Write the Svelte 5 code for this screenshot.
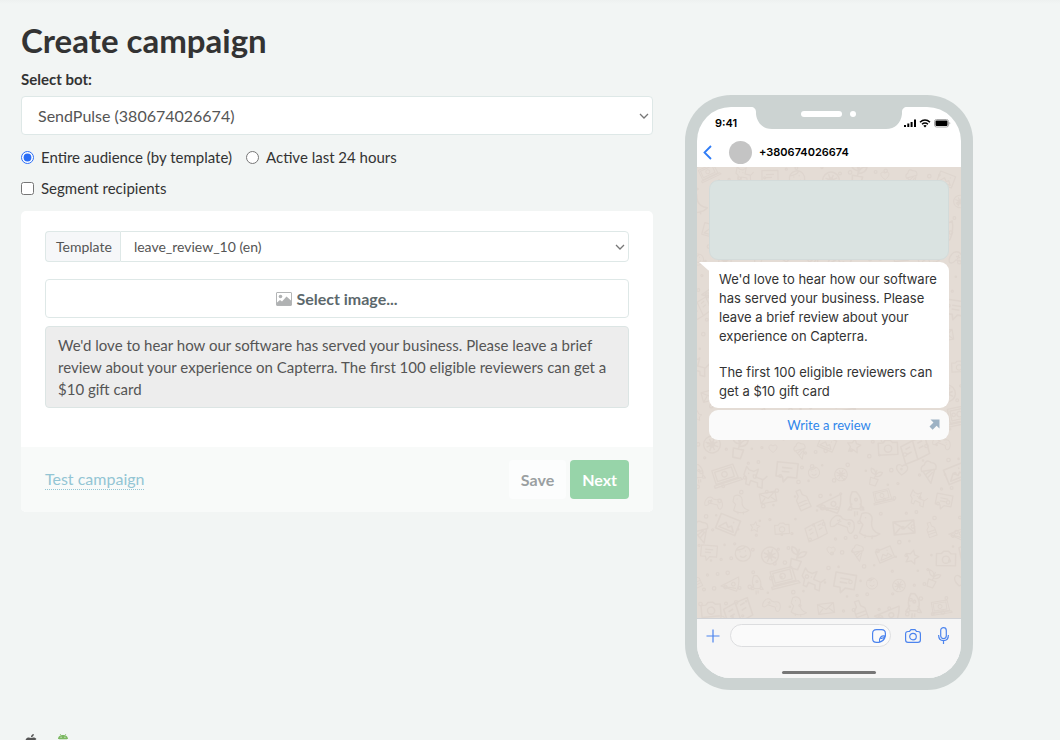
<script lang="ts">
  interface Doodle {
    id: string
    x: number
    y: number
    r: number
    s: number
  }

  let bot = $state('sendpulse')
  let audience = $state('template')
  let segment = $state(false)
  let template = $state('leave_review_10')
  let reply = $state('')

  const templateText =
    "We'd love to hear how our software has served your business. Please leave a brief review about your experience on Capterra. The first 100 eligible reviewers can get a $10 gift card"

  const paragraphs = [
    "We'd love to hear how our software has served your business. Please leave a brief review about your experience on Capterra.",
    'The first 100 eligible reviewers can get a $10 gift card'
  ]

  // Chat wallpaper
  const shapes = [
    'laptop', 'dino', 'photo', 'face', 'pizza', 'book', 'heart', 'cat', 'mail',
    'star', 'wheel', 'rocket', 'gamepad', 'cone', 'bubble', 'bottle', 'camera', 'plant'
  ]

  const doodles: Doodle[] = []
  for (let row = 0; row < 17; row++) {
    for (let col = 0; col < 10; col++) {
      const n = row * 10 + col
      doodles.push({
        id: shapes[(n * 7 + row * 3) % shapes.length],
        x: 12 + col * 29 + (row % 2 ? -14 : 0) + ((n * 5) % 7),
        y: 10 + row * 27 + ((n * 11) % 9) - 4,
        r: ((n * 37) % 50) - 25,
        s: 0.8 + ((n * 13) % 6) / 10
      })
    }
  }

  const dots = Array.from({ length: 420 }, (_, i) => ({
    x: (i * 97.3) % 264,
    y: (i * 61.7 + (i % 5) * 13) % 452,
    r: 0.7 + (i % 4) * 0.35
  }))
</script>

<div class="page">
  <main class="layout">
    <section class="form">
      <h1>Create campaign</h1>

      <label class="field-label" for="bot">Select bot:</label>
      <div class="select-wrap">
        <select id="bot" class="bot-select" bind:value={bot}>
          <option value="sendpulse">SendPulse (380674026674)</option>
        </select>
        <svg class="chevron" viewBox="0 0 10 6"><path d="M1 1l4 4 4-4" /></svg>
      </div>

      <div class="choices">
        <label><input type="radio" name="audience" value="template" bind:group={audience} />Entire audience (by template)</label>
        <label><input type="radio" name="audience" value="active" bind:group={audience} />Active last 24 hours</label>
      </div>
      <div class="choices">
        <label><input type="checkbox" bind:checked={segment} />Segment recipients</label>
      </div>

      <div class="card">
        <div class="card-body">
          <div class="input-group">
            <label for="template">Template</label>
            <div class="select-wrap">
              <select id="template" bind:value={template}>
                <option value="leave_review_10">leave_review_10 (en)</option>
              </select>
              <svg class="chevron" viewBox="0 0 10 6"><path d="M1 1l4 4 4-4" /></svg>
            </div>
          </div>

          <button class="image-button">
            <svg width="16" height="14" viewBox="0 0 16 14">
              <rect x="0.5" y="0.5" width="15" height="13" rx="0.5" fill="#fff" stroke="#b3b5b6" />
              <circle cx="4.5" cy="4.5" r="1.8" fill="#b0b2b3" />
              <path d="M1 13v-2.500l3-2.500 2 1.500 4.500-5 4.500 4V13z" fill="#b0b2b3" />
            </svg>
            Select image...
          </button>

          <textarea rows="3" aria-label="Template text" readonly value={templateText}></textarea>
        </div>

        <div class="card-footer">
          <a href="#test">Test campaign</a>
          <div class="actions">
            <button class="save">Save</button>
            <button class="next">Next</button>
          </div>
        </div>
      </div>
    </section>

    <aside class="phone">
      <div class="screen">
        <svg class="notch" width="156" height="22" viewBox="0 0 156 22">
          <path d="M0 0h156c-3 0-5 2-5 5v2c-1 9-7 15-16 15H21C12 22 6 16 5 7V5c0-3-2-5-5-5z" fill="#ccd3d2" />
          <rect x="50" y="4" width="41" height="6" rx="3" fill="#fff" />
          <circle cx="102" cy="7" r="3" fill="#fff" />
        </svg>

        <div class="status">
          <span>9:41</span>
          <svg width="47" height="9" viewBox="0 0 47 9">
            <path d="M0 6h2v2H0zM3.300 4.500h2V8h-2zM6.600 3h2v5h-2zM10 0.500h2V8h-2z" />
            <g fill="none" stroke="#000" stroke-width="1.500">
              <path d="M16 3.200c3-2.800 7-2.800 10 0M18 5.200c2-1.700 4-1.700 6 0" />
            </g>
            <path d="M21 8.500L19.300 6.700c1-.9 2.400-.9 3.400 0z" />
            <rect x="30.500" y="0.500" width="14" height="7.500" rx="2" fill="none" stroke="#aaa" />
            <rect x="31.500" y="1.500" width="12" height="5.500" rx="1" />
            <path d="M45.500 3v2.500c1-.4 1-2.100 0-2.500z" fill="#999" />
          </svg>
        </div>

        <header class="contact">
          <svg width="9" height="15" viewBox="0 0 9 15"><path d="M8 1L1.500 7.500 8 14" fill="none" stroke="#2f7cf6" stroke-width="1.800" /></svg>
          <span class="avatar"></span>
          <strong>+380674026674</strong>
        </header>

        <div class="chat">
          <svg class="wallpaper" viewBox="0 0 264 452" preserveAspectRatio="xMidYMid slice">
            <defs>
              <path id="laptop" d="M-11-8H9L10 5H-11zM-9-6H7V3H-9zM-13 6H12l1 2H-13zM-1-4a2.500 2.500 0 1 0 .1 0" />
              <path id="dino" d="M-8-9c5-3 10 0 9 6 0 5 3 8 8 9-4 4-13 4-17 1l2-7-3-3zM-5-6h1M-3 8v3M3 8v3" />
              <path id="photo" d="M-8-6H8V6H-8zM-6 4l4-5 3 3 2-2 3 4zM3-3h1" />
              <path id="face" d="M-7 0a7 7 0 1 0 14 0 7 7 0 1 0-14 0M-3-2h1M2-2h1M-3 2q3 3 6 0M-6-4q6 1 9-2" />
              <path id="pizza" d="M-9 6L8-8q3 8 1 16zM-4 4a2 2 0 1 0 .1 0M4-1a2 2 0 1 0 .1 0M8 5L-6 6" />
              <path id="book" d="M-10-5L0-7l10-1V6L0 8l-10 1zM0-7V8M-7-2l4-1M-7 2l4-1M3-4l4-1M3 0l4-1" />
              <path id="heart" d="M0 5C-9-1-4-7 0-3c4-4 9 2 0 8z" />
              <path id="cat" d="M-8-7l3 2h4l3-3v7h6l2 7H6L5 3H-1v4h-3L-5 2l-3-2zM-5-2h1M-1-2h1M8 0l3-5" />
              <path id="mail" d="M-8-5H8V5H-8zM-8-5L0 1l8-6M-8 5l5-5M8 5L3 0" />
              <path id="star" d="M0-6l2 4 4 .6-3 3L4 6 0 4l-4 2 1-4.400-3-3L-2-2z" />
              <path id="wheel" d="M-7 0a7 7 0 1 0 14 0 7 7 0 1 0-14 0M-5 0H5M0-5V5M-4-4l8 8M4-4l-8 8M-2 0a2 2 0 1 0 4 0 2 2 0 1 0-4 0" />
              <path id="rocket" d="M0-9q6 6 3 13h-6q-3-7 0-13zM-3 0l-3 5 3 0M3 0l3 5-3 0M-1 6v4M1 6v3M-1-3a1 1 0 1 0 2 0 1 1 0 1 0-2 0" />
              <path id="gamepad" d="M-9-4q4-3 7 0h4q4-3 7 0 4 6 1 10-3 1-5-4h-10q-2 5-5 4-3-4 1-10zM-6-1h4M-4-3v4M4-2h1M6 0h1" />
              <path id="cone" d="M-5-1L0 10 5-1zM-6-1q-1-4 3-5 2-5 6-1 5 1 3 6zM-3 2L3-1M-2 5l5-4" />
              <path id="bubble" d="M-8-6H8V5H1l-3 4-1-4h-5zM-4-2h8M-4 1h6" />
              <path id="bottle" d="M-2-9h4v5l3 3V9h-10V-1l3-3zM-5 2H5M-5 5H5" />
              <path id="camera" d="M-8-4h4l2-2h4l2 2h4V6H-8zM-3 1a3 3 0 1 0 6 0 3 3 0 1 0-6 0" />
              <path id="plant" d="M-4 2h8L3 9h-6zM0 2V-7M0-2q-6 0-6-5 5 0 6 5M0 0q6-1 6-6-5 0-6 6" />
            </defs>
            <g class="doodles">
              {#each doodles as d}
                <use href="#{d.id}" transform="translate({d.x} {d.y}) rotate({d.r}) scale({d.s})" />
              {/each}
              {#each dots as dot}
                <circle cx={dot.x} cy={dot.y} r={dot.r} />
              {/each}
            </g>
          </svg>

          <div class="messages">
            <div class="media"></div>
            <div class="bubble">
              <svg class="tail" width="12" height="10" viewBox="0 0 12 10"><path d="M0 0h12v10L9 8z" fill="#fff" /></svg>
              {#each paragraphs as text}
                <p>{text}</p>
              {/each}
            </div>
            <a class="link" href="#review">
              Write a review
              <svg class="arrow" width="11" height="11" viewBox="0 0 11 11"><path d="M1.500 0.500h9v9L7.600 6.700l-4 4L0.500 7.500l4-4z" fill="#9db2c4" /></svg>
            </a>
          </div>
        </div>

        <div class="composer">
          <svg width="14" height="14" viewBox="0 0 14 14"><path d="M7 0.500v13M0.500 7h13" /></svg>
          <div class="reply">
            <input type="text" aria-label="Message" bind:value={reply} />
            <svg width="14" height="14" viewBox="0 0 14 14">
              <path d="M13.400 7V4.500c0-2.500-1.400-3.900-3.900-3.900h-5C2 0.600 0.600 2 0.600 4.500v5c0 2.500 1.400 3.900 3.900 3.900H7c3-.8 5.700-3.500 6.400-6.400zM13.300 7c-4-.8-6.500 1.500-5.800 6.300M13.300 7c-1 2-3 2.500-4.600 2.300" />
            </svg>
          </div>
          <svg width="16" height="14" viewBox="0 0 16 14">
            <path d="M3 2.500h1.500L6 0.700h4l1.500 1.800H13c1.500 0 2.400.9 2.400 2.400v6c0 1.500-.9 2.400-2.400 2.400H3c-1.500 0-2.400-.9-2.400-2.400v-6C0.600 3.400 1.500 2.500 3 2.500z" />
            <circle cx="8" cy="7.600" r="3.300" />
          </svg>
          <svg width="11" height="17" viewBox="0 0 11 17">
            <rect x="2.700" y="0.600" width="5.600" height="11" rx="2.800" />
            <path d="M0.600 8c0 3.600 2 5.600 4.900 5.600s4.900-2 4.900-5.600M5.500 13.600V17" />
          </svg>
        </div>
        <div class="home-bar"></div>
      </div>
    </aside>
  </main>

  <footer class="platforms">
    <svg width="12" height="14" viewBox="0 0 12 14">
      <path d="M8.800 0C7 .3 5.800 1.700 6 3.300 7.700 3.200 8.900 1.700 8.800 0zM11.500 5C9.500 3 7.500 3.500 6.200 4.100 4.500 3.500 2.600 3 1 4.900c-2.200 3.200.3 8.800 2.700 8.800 1 0 1.400-.6 2.500-.6s1.400.6 2.400.6c1.500 0 2.600-2 3.100-3.500-2.200-1-2.300-3.900-.2-5.200z" fill="#555" />
    </svg>
    <svg width="12" height="14" viewBox="0 0 12 14">
      <path d="M3 0l1 1.200M9 0L8 1.200" stroke="#7cb862" stroke-width="0.700" />
      <path d="M1 5c0-5.500 10-5.500 10 0zM2 5.700h8V11H8.500v3H7v-3H5v3H3.500v-3H2zM0 6h1.300v4H0zM10.700 6H12v4h-1.300z" fill="#7cb862" />
      <path d="M3.600 2.800h.9v.9h-.9zM7.500 2.800h.9v.9h-.9z" fill="#fff" />
    </svg>
  </footer>
</div>

<style>
  :global(body) {
    background: #f2f5f4;
  }

  * {
    box-sizing: border-box;
  }

  .page {
    padding: 21px 87px 0 21px;
    background: linear-gradient(#eef1f0, #f2f5f4 4px);
    color: #333;
    font-family: Lato, 'Liberation Sans', sans-serif;
    font-size: 15px;
    line-height: 22px;
  }

  .layout {
    display: grid;
    grid-template-columns: minmax(0, 1fr) 288px;
    gap: 32px;
    align-items: start;
  }

  h1 {
    margin: 0 0 9px;
    font-size: 33px;
    line-height: 38px;
    font-weight: 700;
  }

  .field-label {
    display: block;
    margin-bottom: 6px;
    font-weight: 700;
  }

  button,
  input,
  select,
  textarea {
    font: inherit;
  }

  /* Selects */
  .select-wrap {
    position: relative;
    flex: 1;
  }

  select {
    appearance: none;
    display: block;
    width: 100%;
    height: 31px;
    padding: 0 30px 0 13px;
    border: 1px solid #dee8e7;
    border-radius: 0 4px 4px 0;
    background: #fff;
    color: #555;
  }

  .bot-select {
    height: 39px;
    padding-left: 16px;
    border-radius: 4px;
    font-size: 16px;
  }

  .chevron {
    position: absolute;
    right: 4px;
    top: calc(50% - 3px);
    width: 10px;
    height: 6px;
    fill: none;
    stroke: #777;
    stroke-width: 1.3;
    pointer-events: none;
  }

  .choices {
    display: flex;
    gap: 14px;
    margin-top: 9px;
  }

  .select-wrap + .choices {
    margin-top: 11px;
  }

  .choices label {
    display: flex;
    align-items: center;
    gap: 7px;
  }

  .choices input {
    width: 13px;
    height: 13px;
    margin: 0;
    accent-color: #2a6df5;
  }

  /* Card */
  .card {
    margin-top: 12px;
    border-radius: 5px;
    background: #fff;
    overflow: hidden;
  }

  .card-body {
    display: flex;
    flex-direction: column;
    padding: 20px 24px 39px;
  }

  .input-group {
    display: flex;
    margin-bottom: 17px;
    font-size: 14px;
  }

  .input-group label {
    display: flex;
    align-items: center;
    padding: 0 8px 0 10px;
    border: 1px solid #dee8e7;
    border-right: 0;
    border-radius: 4px 0 0 4px;
    background: #f6f7f9;
    color: #555;
  }

  .image-button {
    display: flex;
    align-items: center;
    justify-content: center;
    gap: 4px;
    height: 39px;
    margin-bottom: 8px;
    border: 1px solid #dee8e7;
    border-radius: 4px;
    background: #fff;
    color: #5c686c;
    font-size: 16px;
    font-weight: 700;
  }

  textarea {
    display: block;
    width: 100%;
    padding: 7px 12px;
    border: 1px solid #dce5e4;
    border-radius: 4px;
    background: #ededed;
    color: #555;
    resize: none;
    overflow: hidden;
  }

  .card-footer {
    display: flex;
    align-items: center;
    justify-content: space-between;
    padding: 13px 24px;
    background: #f8faf9;
    font-size: 16px;
  }

  .card-footer a {
    border-bottom: 1px dotted #93c5d4;
    color: #93c5d4;
    line-height: 20px;
    text-decoration: none;
  }

  .actions {
    display: flex;
    gap: 4px;
  }

  .actions button {
    height: 39px;
    padding: 0 12px;
    border: 0;
    border-radius: 4px;
    font-weight: 700;
  }

  .save {
    background: #fcfdfd;
    color: #9a9fa1;
  }

  .next {
    background: #97d4a9;
    color: #fff;
  }

  /* Phone preview */
  .phone {
    margin-top: 74px;
    padding: 12px;
    border-radius: 46px;
    background: #ccd3d2;
  }

  .screen {
    position: relative;
    border-radius: 34px;
    background: #fff;
    color: #000;
    font-family: Inter, 'Liberation Sans', sans-serif;
    overflow: hidden;
  }

  .notch {
    position: absolute;
    top: 0;
    left: calc(50% - 78px);
  }

  .status {
    display: flex;
    align-items: center;
    justify-content: space-between;
    height: 32px;
    padding: 0 10px 0 18px;
    font-size: 11px;
    font-weight: 600;
  }

  .contact {
    display: flex;
    align-items: center;
    height: 28px;
    padding: 0 6px 2px;
    font-size: 11px;
  }

  .contact strong {
    font-weight: 600;
  }

  .avatar {
    width: 23px;
    height: 23px;
    margin: 0 7px 0 17px;
    border-radius: 50%;
    background: #c4c4c4;
  }

  .chat {
    position: relative;
    height: 451px;
    background: #e4dcd5;
  }

  .wallpaper {
    position: absolute;
    inset: 0;
    width: 100%;
    height: 100%;
  }

  .doodles {
    fill: none;
    stroke: #ded5ce;
    stroke-width: 1.2;
    stroke-linejoin: round;
  }

  .messages {
    position: relative;
    padding: 13px 12px;
  }

  .media {
    height: 80px;
    margin-bottom: 2px;
    border: 1px solid #d3dbda;
    border-radius: 9px;
    background: #dae3e1;
  }

  .bubble {
    position: relative;
    padding: 8px 10px 7px;
    border-radius: 0 9px 9px 9px;
    background: #fff;
    color: #333;
    font-size: 13px;
    line-height: 19px;
  }

  .tail {
    position: absolute;
    top: 0;
    left: -10px;
  }

  p {
    margin: 0 0 17px;
  }

  p:last-child {
    margin-bottom: 0;
  }

  .link {
    position: relative;
    display: block;
    margin-top: 2px;
    border-radius: 9px;
    background: #fafafa;
    color: #2f86eb;
    font-family: Lato, sans-serif;
    font-size: 13px;
    line-height: 30px;
    text-align: center;
    text-decoration: none;
  }

  .arrow {
    position: absolute;
    top: 9px;
    right: 9px;
  }

  .composer {
    display: flex;
    align-items: center;
    height: 34px;
    padding: 0 12px 0 9px;
    border-top: 1px solid #d0d2d6;
    background: #f6f6f6;
  }

  .composer svg {
    flex-shrink: 0;
    fill: none;
    stroke: #4c84ee;
    stroke-width: 1.2;
  }

  .reply {
    display: flex;
    align-items: center;
    flex: 1;
    min-width: 0;
    height: 23px;
    margin: 0 14px 0 10px;
    padding: 0 4px 0 10px;
    border: 1px solid #dcdddf;
    border-radius: 12px;
    background: #fafafa;
  }

  .reply + svg {
    margin-right: 17px;
  }

  .reply input {
    flex: 1;
    min-width: 0;
    padding: 0;
    border: 0;
    background: none;
    font-size: 12px;
    outline: none;
  }

  .home-bar {
    height: 26px;
    background: #f6f6f6;
  }

  .home-bar::after {
    content: '';
    position: absolute;
    bottom: 4px;
    left: calc(50% - 47px);
    width: 94px;
    height: 3px;
    border-radius: 2px;
    background: #777;
  }

  .platforms {
    display: flex;
    gap: 20px;
    padding: 44px 4px 24px;
  }

  .platforms svg {
    display: block;
  }
</style>
